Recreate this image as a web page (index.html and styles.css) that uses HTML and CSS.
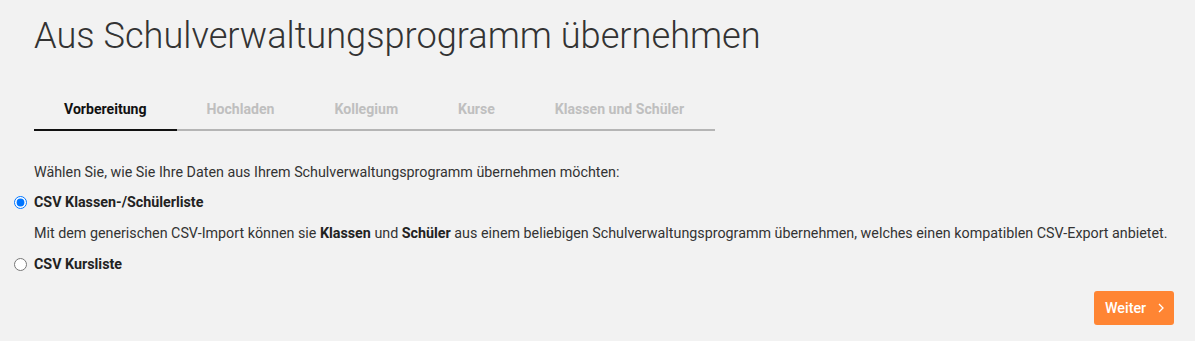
FILE: index.html
```html
<!DOCTYPE html>
<html lang="de">
<head>
<meta charset="utf-8">
<link rel="stylesheet" href="styles.css">
</head>
<body>
<div class="page">
  <h1 class="title">Aus Schulverwaltungsprogramm übernehmen</h1>
  <nav class="tabs">
    <span class="tab active">Vorbereitung</span>
    <span class="tab">Hochladen</span>
    <span class="tab">Kollegium</span>
    <span class="tab">Kurse</span>
    <span class="tab">Klassen und Schüler</span>
  </nav>
  <p class="intro">Wählen Sie, wie Sie Ihre Daten aus Ihrem Schulverwaltungsprogramm übernehmen möchten:</p>
  <label class="option">
    <input type="radio" name="src" checked>
    <span>CSV Klassen-/Schülerliste</span>
  </label>
  <p class="desc">Mit dem generischen CSV-Import können sie <b>Klassen</b> und <b>Schüler</b> aus einem beliebigen Schulverwaltungsprogramm übernehmen, welches einen kompatiblen CSV-Export anbietet.</p>
  <label class="option second">
    <input type="radio" name="src">
    <span>CSV Kursliste</span>
  </label>
  <div class="actions">
    <button class="btn">Weiter
      <svg class="chev" width="6" height="10" viewBox="0 0 6 10"><path d="M1 1 L5 5 L1 9" fill="none" stroke="#fff" stroke-width="1.3"/></svg>
    </button>
  </div>
</div>
</body>
</html>
```
FILE: styles.css
```css
html, body {
  margin: 0;
  background: #f2f2f2;
}
body {
  font-family: Roboto, "Liberation Sans", sans-serif;
  color: #333;
  font-size: 14.3px;
}
.page {
  padding: 0 21px 0 34px;
  height: 341px;
  box-sizing: border-box;
}
.title {
  margin: 0;
  padding-top: 14px;
  font-weight: 300;
  font-size: 36.2px;
  line-height: 44px;
  color: #333;
}
.tabs {
  display: flex;
  width: 681px;
  margin-top: 30px;
  border-bottom: 2px solid #b5b5b5;
}
.tab {
  padding: 11px 30px 10px;
  font-weight: 700;
  font-size: 14.1px;
  line-height: 20px;
  color: #bfbfbf;
  margin-bottom: -2px;
  border-bottom: 2px solid transparent;
}
.tab.active {
  color: #111;
  border-bottom-color: #111;
}
.intro {
  margin: 31px 0 0;
  line-height: 20px;
}
.option {
  display: flex;
  align-items: center;
  margin-left: -20px;
  margin-top: 10px;
  font-weight: 700;
  line-height: 20px;
  color: #222;
}
.option.second {
  margin-top: 11px;
}
.option input {
  margin: 0 7px 0 0;
  width: 13px;
  height: 13px;
}
.desc {
  margin: 11px 0 0;
  line-height: 20px;
}
.desc b { color: #222; }
.actions {
  display: flex;
  justify-content: flex-end;
  margin-top: 17px;
}
.btn {
  width: 80px;
  height: 34px;
  border: 0;
  border-radius: 3px;
  background: #ff8533;
  color: #fff;
  font-family: Roboto, "Liberation Sans", sans-serif;
  font-weight: 500;
  font-size: 14.3px;
  display: flex;
  align-items: center;
  justify-content: flex-start;
  gap: 12px;
  padding: 0 0 0 11px;
}
.chev {
  display: block;
}
```
